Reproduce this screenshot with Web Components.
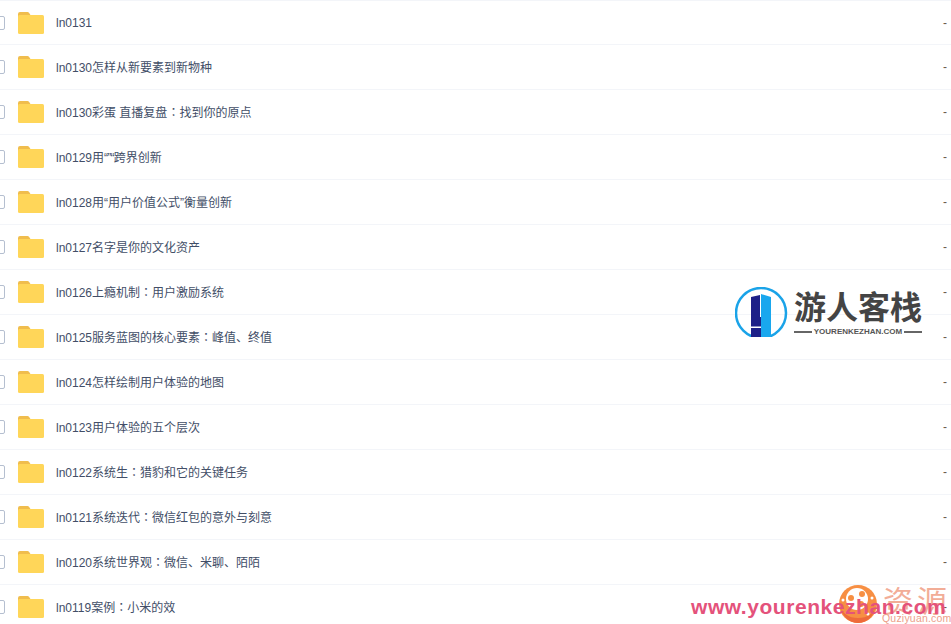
<!DOCTYPE html>
<html>
<head>
<meta charset="utf-8">
<style>
html, body { margin: 0; padding: 0; background: #fff; overflow: hidden; height: 624px; }
</style>
</head>
<body>
<file-list>
  <file-row name="ln0131"></file-row>
  <file-row name="ln0130怎样从新要素到新物种"></file-row>
  <file-row name="ln0130彩蛋 直播复盘：找到你的原点"></file-row>
  <file-row name="ln0129用“”“跨界创新"></file-row>
  <file-row name="ln0128用“用户价值公式”衡量创新"></file-row>
  <file-row name="ln0127名字是你的文化资产"></file-row>
  <file-row name="ln0126上瘾机制：用户激励系统"></file-row>
  <file-row name="ln0125服务蓝图的核心要素：峰值、终值"></file-row>
  <file-row name="ln0124怎样绘制用户体验的地图"></file-row>
  <file-row name="ln0123用户体验的五个层次"></file-row>
  <file-row name="ln0122系统生：猎豹和它的关键任务"></file-row>
  <file-row name="ln0121系统迭代：微信红包的意外与刻意"></file-row>
  <file-row name="ln0120系统世界观：微信、米聊、陌陌"></file-row>
  <file-row name="ln0119案例：小米的效"></file-row>
</file-list>
<logo-mark></logo-mark>
<corner-mark></corner-mark>
<script>
class FileList extends HTMLElement {
  constructor() {
    super()
    this.attachShadow({mode:'open'}).innerHTML = `
    <style>
    :host { display: block; width: 951px; border-top: 1px solid #f3f5f9; }
    </style>
    <slot></slot>`
  }
}

class FileRow extends HTMLElement {
  constructor() {
    super()
    this.attachShadow({mode:'open'}).innerHTML = `
    <style>
    :host {
      display: flex;
      align-items: center;
      box-sizing: border-box;
      height: 45px;
      padding-bottom: 1px;
      border-bottom: 1px solid #f3f5f9;
      font: 12px "Liberation Sans", "Noto Sans CJK SC", sans-serif;
      color: #424e67;
    }
    :host(:first-child) { height: 44px; padding-bottom: 0; }
    .check {
      flex: none;
      box-sizing: border-box;
      width: 14px;
      height: 14px;
      margin-left: -9px;
      border: 1px solid #b5bfd0;
      border-radius: 2px;
      background: #fff;
    }
    svg { flex: none; display: block; margin-left: 13px; }
    .name { flex: 1; margin-left: 12px; white-space: nowrap; }
    .name .colon { font-family: "Noto Sans CJK TC", sans-serif; }
    .name .quotes { letter-spacing: -.8px; }
    .size { flex: none; width: 5px; margin-right: 3px; color: #6b5a4a; }
    </style>
    <span class="check"></span>
    <svg width="26" height="22" viewBox="0 0 26 22">
      <path d="M0 2a2 2 0 0 1 2-2h7.5a2 2 0 0 1 1.5.7L12.5 3H24v4H0z" fill="#f0bd4d"/>
      <rect x="0" y="3" width="26" height="19" rx="1.5" fill="#ffd659"/>
    </svg>
    <span class="name"></span>
    <span class="size">-</span>`
  }

  connectedCallback() {
    const name = this.getAttribute('name')
    this.shadowRoot.querySelector('.name').innerHTML = name
      .replace('：', '<span class="colon">：</span>')
      .replace('“”“', '<span class="quotes">“”“</span>')
  }
}

class LogoMark extends HTMLElement {
  constructor() {
    super()
    this.attachShadow({mode:'open'}).innerHTML = `
    <style>
    :host { position: absolute; left: 735px; top: 282px; width: 190px; height: 58px; display: block; }
    svg { position: absolute; left: 0; top: 5px; }
    .title {
      position: absolute; left: 59px; top: 2px; white-space: nowrap;
      font: bold 32px/42px "Noto Sans CJK SC", serif; color: #444;
    }
    .sub {
      position: absolute; top: 44px; left: 59px; width: 128px;
      display: flex; align-items: center; gap: 2px;
      font: bold 8px/12px "Liberation Sans", sans-serif; color: #555; white-space: nowrap;
    }
    .sub i { flex: 1; height: 2px; background: #666; }
    </style>
    <svg width="54" height="50" viewBox="0 0 54 50">
      <circle cx="26" cy="26" r="25" fill="none" stroke="#1aa3e8" stroke-width="2.500"/>
      <path d="M16 10 L25 8 V30 H26 V50 H16Z" fill="#1d2088"/>
      <path d="M26 30 V7 L36 10 V50 H26Z" fill="#19a7ee"/>
      <rect x="16" y="39.500" width="10" height="1.500" fill="#fff"/>
    </svg>
    <div class="title">游人客栈</div>
    <div class="sub"><i></i>YOURENKEZHAN.COM<i></i></div>`
  }
}

class CornerMark extends HTMLElement {
  constructor() {
    super()
    this.attachShadow({mode:'open'}).innerHTML = `
    <style>
    :host { position: absolute; left: 680px; top: 572px; width: 271px; height: 52px; display: block; }
    svg { position: absolute; left: 158px; top: 12px; }
    .cn { position: absolute; left: 203px; top: 9px; font: 30px/36px "Noto Sans CJK SC", sans-serif; color: #f2ad97; letter-spacing: 4px; white-space: nowrap; }
    .py { position: absolute; left: 202px; top: 41px; font: 10.500px/11px "Liberation Sans", sans-serif; color: #eda08a; letter-spacing: .2px; white-space: nowrap; }
    .url { position: absolute; left: 11px; top: 22px; font: bold 21px/26px "Liberation Sans", sans-serif; color: #e4527b; letter-spacing: .55px; white-space: nowrap; }
    </style>
    <svg width="40" height="40" viewBox="0 0 40 40">
      <circle cx="20" cy="20" r="19" fill="#f78f43"/>
      <path d="M3 22a17 17 0 0 0 34 0a17 12 0 0 1 -34 0z" fill="#ee6a3a"/>
      <circle cx="19" cy="15" r="11" fill="#fff"/>
      <circle cx="13" cy="14" r="3" fill="#f78f43"/>
      <circle cx="24" cy="10" r="3" fill="#f78f43"/>
      <circle cx="23" cy="20" r="3" fill="#f78f43"/>
      <circle cx="5" cy="16" r="1.500" fill="#fff"/>
      <circle cx="34" cy="14" r="1.500" fill="#fff"/>
      <circle cx="30" cy="30" r="1.500" fill="#fff"/>
    </svg>
    <div class="cn">资源</div>
    <div class="py">Quziyuan.com</div>
    <div class="url">www.yourenkezhan.com</div>`
  }
}

customElements.define('file-list', FileList)
customElements.define('file-row', FileRow)
customElements.define('logo-mark', LogoMark)
customElements.define('corner-mark', CornerMark)
</script>
</body>
</html>
